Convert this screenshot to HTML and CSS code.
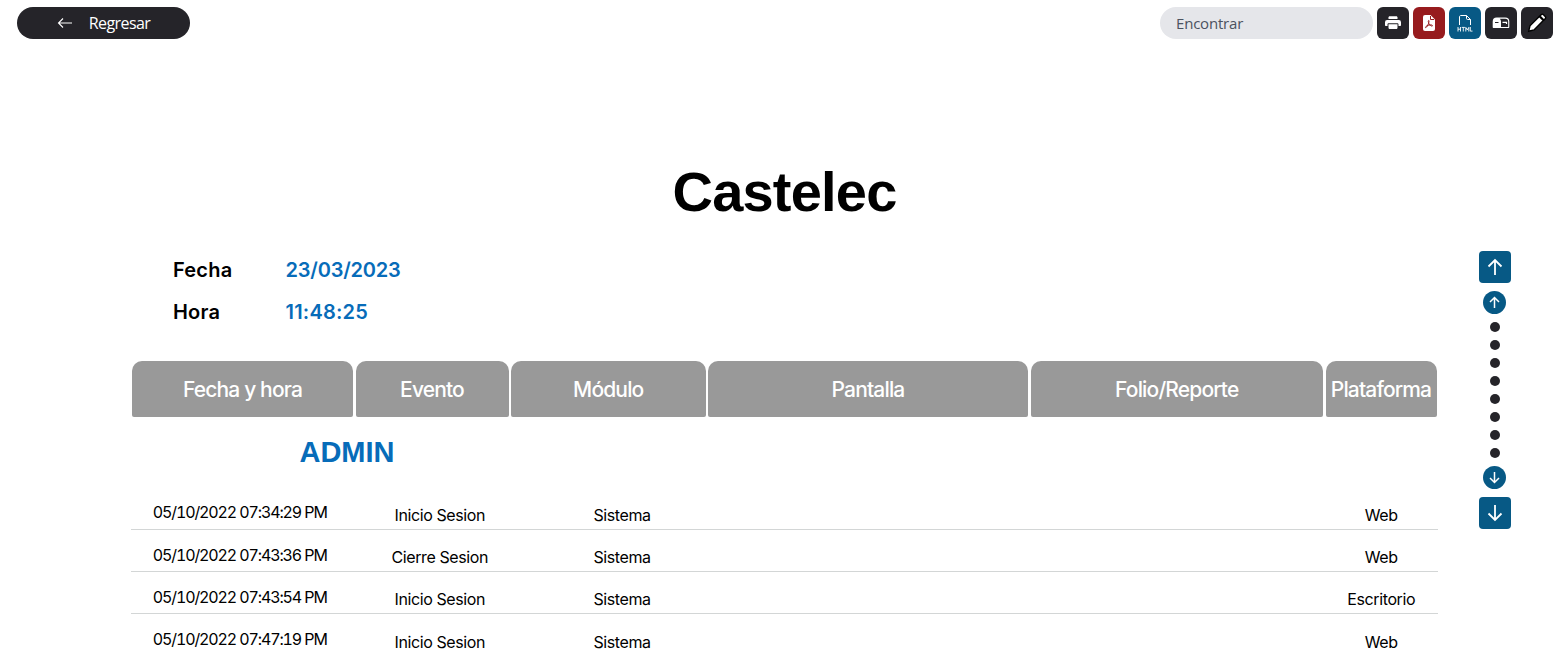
FILE: index.html
```
<!DOCTYPE html>
<html lang="es">

<head>
    <meta charset="UTF-8">
    <meta name="viewport" content="width=device-width, initial-scale=1.0">
    <title>Castelec</title>
    <link rel="stylesheet" href="styles.css">
</head>

<body>
    <header class="toolbar">
        <button class="back-button">
            <svg width="16" height="12" viewBox="0 0 16 12" fill="none" stroke="currentColor" stroke-width="1.1"><path d="M15 6H1.5M6 1.5L1.5 6L6 10.5"/></svg>
            <span>Regresar</span>
        </button>
        <div class="tools">
            <input class="search" type="text" placeholder="Encontrar">
            <button class="tool" aria-label="Imprimir">
                <svg width="16" height="16" viewBox="0 0 16 16" fill="currentColor"><path d="M3.500 4V2.600C3.500 1.900 4 1.300 4.700 1.300h6.600c.7 0 1.200.6 1.200 1.300V4z"/><path d="M2.500 5h11A2.300 2.300 0 0 1 16 7.300V10c0 .6-.4 1-1 1h-1.500V9.500c0-.8-.5-1.300-1.300-1.300H3.800c-.8 0-1.300.5-1.300 1.300V11H1c-.6 0-1-.4-1-1V7.300A2.300 2.300 0 0 1 2.500 5z"/><path d="M3.500 9.200h9v3.500c0 .8-.6 1.300-1.300 1.300H4.800c-.7 0-1.300-.5-1.300-1.300z"/></svg>
            </button>
            <button class="tool red" aria-label="PDF">
                <svg width="14" height="16" viewBox="0 0 14 16"><path fill="currentColor" d="M3 0h5.500L13 4.500V14a2 2 0 0 1-2 2H3a2 2 0 0 1-2-2V2a2 2 0 0 1 2-2z"/><path fill="none" stroke="#971b1e" stroke-width="1" d="M8.500 1v3.500H12M6.800 5.500c-.9 0-.5 2 .3 3.400.8 1.300 2.200 2.300 3 2.200.9-.2.300-1.200-1.200-1.200-1.800 0-3.500.5-4.600 1.300-1.300 1-.8 1.800-.2 1.300 1-.8 2.300-3.200 2.800-5.300.2-1 .2-1.700-.1-1.700z"/></svg>
            </button>
            <button class="tool blue" aria-label="HTML">
                <svg width="16" height="17" viewBox="0 0 16 17" fill="none" stroke="currentColor"><path stroke-width="1" d="M2.500 10V2c0-.8.400-1.500 1.200-1.500H9.500l4 4V10M9.500.5v3c0 .6.400 1 1 1h3"/><path stroke-width=".9" d="M1 12v4.500M3.500 12v4.500M1 14.200h2.500M4.700 12.400h3.200M6.300 12.400v4.100M8.800 16.500V12.400l1.500 2.500 1.500-2.500v4.100M13.300 12v4.100h2.200"/></svg>
            </button>
            <button class="tool" aria-label="Enviar">
                <svg width="18" height="14" viewBox="0 0 18 14"><path fill="currentColor" fill-rule="evenodd" d="M4.700 1.500h8.600a4 4 0 0 1 4 4V11c0 .6-.4 1-1 1H1.700c-.6 0-1-.4-1-1V5.500a4 4 0 0 1 4-4zM9 11V5.500C9 4.200 8.500 3.300 7.700 2.700h5.400A3 3 0 0 1 16.200 5.700V11z"/><path fill="none" stroke="currentColor" stroke-width="1.200" d="M10.500 6.400H14.500V8"/><path stroke="#252429" d="M3 6.500h3.500"/></svg>
            </button>
            <button class="tool" aria-label="Editar">
                <svg width="20" height="20" viewBox="1 1 20 20"><path fill="currentColor" stroke="#000" stroke-width="1.400" d="M2.700 19.200l1.300-5.400L13.300 4.600l4 4L8 17.900z"/><path fill="currentColor" stroke="#000" stroke-width="1.400" d="M13.900 4l1.300-1.300c.7-.7 1.600-.7 2.300 0l1.700 1.700c.7.700.7 1.600 0 2.300L17.900 8z"/></svg>
            </button>
        </div>
    </header>

    <main class="content">
        <section class="report">
            <h1 class="title">Castelec</h1>
            <dl class="info">
                <dt>Fecha</dt>
                <dd>23/03/2023</dd>
                <dt>Hora</dt>
                <dd class="time">11:48:25</dd>
            </dl>
            <div class="columns tabs">
                <div class="tab">Fecha y hora</div>
                <div class="tab">Evento</div>
                <div class="tab">Módulo</div>
                <div class="tab">Pantalla</div>
                <div class="tab">Folio/Reporte</div>
                <div class="tab">Plataforma</div>
            </div>
            <h2 class="user">ADMIN</h2>
            <div class="columns row">
                <span class="date">05/10/2022 07:34:29 PM</span>
                <span class="event">Inicio Sesion</span>
                <span class="module">Sistema</span>
                <span></span>
                <span></span>
                <span>Web</span>
            </div>
            <div class="columns row">
                <span class="date low">05/10/2022 07:43:36 PM</span>
                <span class="event">Cierre Sesion</span>
                <span class="module">Sistema</span>
                <span></span>
                <span></span>
                <span>Web</span>
            </div>
            <div class="columns row">
                <span class="date low">05/10/2022 07:43:54 PM</span>
                <span class="event">Inicio Sesion</span>
                <span class="module">Sistema</span>
                <span></span>
                <span></span>
                <span>Escritorio</span>
            </div>
            <div class="columns row last">
                <span class="date">05/10/2022 07:47:19 PM</span>
                <span class="event">Inicio Sesion</span>
                <span class="module">Sistema</span>
                <span></span>
                <span></span>
                <span>Web</span>
            </div>
        </section>

        <nav class="pager">
            <button class="page-end" aria-label="Primera"><svg width="16" height="18" viewBox="0 0 16 18"><path d="M8 17V2M1.500 8.500L8 2l6.500 6.500"/></svg></button>
            <button class="page-step" aria-label="Anterior"><svg width="11" height="13" viewBox="0 0 11 13"><path d="M5.500 12V1.500M1 6l4.500-4.500L10 6"/></svg></button>
            <div class="dots">
                <i class="dot"></i>
                <i class="dot"></i>
                <i class="dot"></i>
                <i class="dot"></i>
                <i class="dot"></i>
                <i class="dot"></i>
                <i class="dot"></i>
                <i class="dot"></i>
            </div>
            <button class="page-step" aria-label="Siguiente"><svg width="11" height="13" viewBox="0 0 11 13"><path d="M5.500 1v10.500M1 7l4.500 4.500L10 7"/></svg></button>
            <button class="page-end" aria-label="Ultima"><svg width="16" height="18" viewBox="0 0 16 18"><path d="M8 1v15M1.500 9.500L8 16l6.500-6.500"/></svg></button>
        </nav>
    </main>
</body>

</html>
```
FILE: styles.css
```
* {
    margin: 0;
    padding: 0;
    box-sizing: border-box;
}

body {
    width: 100%;
    height: 100vh;
    overflow: hidden;
    background-color: #fff;
    color: #000;
    font-family: Inter, sans-serif;
}

button {
    border: none;
    color: #fff;
    display: flex;
    justify-content: center;
    align-items: center;
}

.toolbar {
    display: flex;
    justify-content: space-between;
    padding: 7px 15px 0 17px;
}

.back-button {
    width: 173px;
    height: 32px;
    gap: 16px;
    border-radius: 16px;
    background-color: #252429;
    font: 16px "Open Sans", sans-serif;
    letter-spacing: -0.6px;
}

.tools {
    display: flex;
    gap: 4px;
}

.search {
    width: 213px;
    height: 32px;
    padding: 0 16px;
    border: none;
    border-radius: 16px;
    background-color: #e5e6ea;
    font: 15px "Open Sans", sans-serif;
    letter-spacing: -0.2px;
}

.search::placeholder {
    color: #4b5260;
}

.tool {
    width: 32px;
    height: 32px;
    border-radius: 6px;
    background-color: #252429;
}

.tool.red {
    background-color: #971b1e;
}

.tool.blue {
    background-color: #075985;
}

.content {
    display: flex;
    align-items: flex-start;
    padding-left: 131px;
}

.report {
    width: 1307px;
    padding-top: 121px;
}

.title {
    font: bold 56px/64px "Liberation Sans", Arial, sans-serif;
    letter-spacing: -0.8px;
    text-align: center;
}

.info {
    display: grid;
    grid-template-columns: 112.5px 200px;
    grid-auto-rows: 42px;
    align-items: center;
    margin: 25px 0 0 42px;
    font-size: 20px;
    font-weight: 600;
}

.info dt {
    letter-spacing: 0.2px;
}

.info dd {
    color: #076cb9;
    letter-spacing: -0.2px;
}

.info .time {
    letter-spacing: 0.2px;
}

.columns {
    display: grid;
    grid-template-columns: 223.5px 155.5px 197px 322.5px 295px 113.5px;
}

.tabs {
    margin-top: 28px;
}

.tab {
    height: 56px;
    margin: 0 1.5px 0 1px;
    border-radius: 10px 10px 2px 2px;
    background-color: #999;
    color: #fff;
    font-size: 21px;
    font-weight: 500;
    letter-spacing: -0.85px;
    line-height: 57px;
    text-align: center;
    white-space: nowrap;
}

.user {
    width: 432px;
    margin-top: 17px;
    color: #076cb9;
    font: bold 29px/36px "Liberation Sans", Arial, sans-serif;
    text-align: center;
}

.row {
    height: 42px;
    padding-top: 17px;
    border-bottom: 1px solid #d3d6d6;
    font-size: 16px;
    letter-spacing: -0.4px;
    line-height: 20px;
    text-align: center;
}

.user + .row {
    margin-top: 18px;
}

.row.last {
    height: 43px;
    padding-top: 18px;
}

.date {
    margin-top: -3px;
    padding-right: 6px;
    font-variant-numeric: tabular-nums;
    letter-spacing: -1.12px;
}

.date.low {
    margin-top: -2px;
}

.event {
    padding-left: 15px;
}

.module {
    padding-left: 27px;
}

.pager {
    display: flex;
    flex-direction: column;
    align-items: center;
    margin: 212px 0 0 41px;
}

.pager button {
    background-color: #075985;
}

.pager svg {
    fill: none;
    stroke: #fff;
    stroke-width: 1.8;
}

.page-end {
    width: 32px;
    height: 32px;
    border-radius: 4px;
}

.pager .page-step {
    width: 23px;
    height: 23px;
    margin: 8px 1px 8px 0;
    border-radius: 50%;
}

.pager .page-step svg {
    stroke-width: 1.5;
}

.dots {
    display: flex;
    flex-direction: column;
    gap: 8px;
}

.dot {
    width: 10px;
    height: 10px;
    border-radius: 50%;
    background-color: #252429;
}
```
